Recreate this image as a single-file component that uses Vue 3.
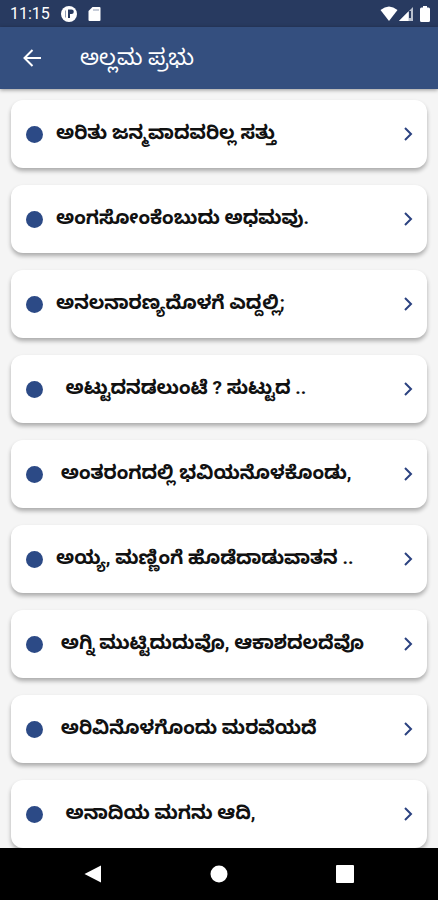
<script setup>
import { ref } from "vue";

const title = "ಅಲ್ಲಮ ಪ್ರಭು";

// some titles keep the leading spaces they have in the source text
const vachanas = ref([
  "ಅರಿತು ಜನ್ಮವಾದವರಿಲ್ಲ ಸತ್ತು",
  "ಅಂಗಸೋಂಕೆಂಬುದು ಅಧಮವು.",
  "ಅನಲನಾರಣ್ಯದೊಳಗೆ ಎದ್ದಲ್ಲಿ;",
  "  ಅಟ್ಟುದನಡಲುಂಟೆ ? ಸುಟ್ಟುದ ..",
  " ಅಂತರಂಗದಲ್ಲಿ ಭವಿಯನೊಳಕೊಂಡು,",
  "ಅಯ್ಯ, ಮಣ್ಣಿಂಗೆ ಹೊಡೆದಾಡುವಾತನ ..",
  " ಅಗ್ನಿ ಮುಟ್ಟಿದುದುವೊ, ಆಕಾಶದಲದೆವೊ",
  " ಅರಿವಿನೊಳಗೊಂದು ಮರವೆಯದೆ",
  "  ಅನಾದಿಯ ಮಗನು ಆದಿ,"
]);
</script>

<template>
  <div class="screen">
    <div class="status-bar">
      <span class="time">11:15</span>
      <svg class="status-icon" width="16" height="16" viewBox="0 0 16 16">
        <circle cx="8" cy="8" r="8" fill="#fff" />
        <path d="M4.500 4.500v7" stroke="#8f9bb3" />
        <path d="M7 3.500h3.500a2.300 2.300 0 0 1 0 4.600H9v4H7z" fill="#283a60" />
      </svg>
      <svg class="status-icon" width="13" height="16" viewBox="0 0 13 16">
        <path d="M4.500 1H11.500a1 1 0 0 1 1 1V14a1 1 0 0 1-1 1H1.500a1 1 0 0 1-1-1V5z" fill="#fff" />
        <path d="M5 4h6" stroke="#8f9bb3" />
      </svg>
      <div class="status-right">
        <svg width="18" height="16" viewBox="0 0 18 16">
          <path d="M0.500 4Q9-3 17.500 4L9 15z" fill="#fff" />
        </svg>
        <svg width="16" height="16" viewBox="0 0 16 16">
          <path d="M15 1V15H1z" fill="#b9c0ce" />
          <path d="M10.500 5.500V15H1z" fill="#fff" />
          <path d="M12 5v7" stroke="#283a60" stroke-width="2" />
        </svg>
        <svg class="battery" width="10" height="16" viewBox="0 0 10 16">
          <path d="M3 0h4v1.500h1.500A1.500 1.500 0 0 1 10 3v11.500a1.500 1.500 0 0 1-1.500 1.500h-7A1.500 1.500 0 0 1 0 14.500V3A1.500 1.500 0 0 1 1.500 1.500H3z" fill="#fff" />
        </svg>
      </div>
    </div>

    <header class="app-bar">
      <button class="back" aria-label="Back">
        <svg width="20" height="20" viewBox="0 0 20 20" fill="none" stroke="#fff" stroke-width="2">
          <path d="M19 10H3M10.500 2 2.500 10l8 8" />
        </svg>
      </button>
      <h1>{{ title }}</h1>
    </header>

    <main class="list">
      <a v-for="(item, index) in vachanas" :key="index" class="card" href="#">
        <span class="dot"></span>
        <span class="card-title">{{ item }}</span>
        <svg width="10" height="14" viewBox="0 0 10 14" fill="none" stroke="#2b4280" stroke-width="2">
          <path d="M2 1l6 6-6 6" />
        </svg>
      </a>
    </main>

    <nav class="nav-bar">
      <button aria-label="Back">
        <svg width="18" height="18" viewBox="0 0 18 18"><path d="M17 0.500v17L0.500 9z" fill="#fff" /></svg>
      </button>
      <button aria-label="Home">
        <svg width="18" height="18" viewBox="0 0 18 18"><circle cx="9" cy="9" r="8.500" fill="#fff" /></svg>
      </button>
      <button aria-label="Recent">
        <svg width="18" height="18" viewBox="0 0 18 18"><rect width="18" height="18" rx="1" fill="#fff" /></svg>
      </button>
    </nav>
  </div>
</template>

<style>
body {
  margin: 0;
}
</style>

<style scoped>
.screen {
  display: flex;
  flex-direction: column;
  height: 100vh;
  background-color: #f5f5f5;
  font-family: Roboto, "Noto Sans", "Noto Sans Kannada", sans-serif;
}

svg {
  display: block;
  flex: none;
}

button {
  padding: 0;
  border: none;
  background: none;
  cursor: pointer;
}

.status-bar {
  display: flex;
  flex: none;
  align-items: center;
  height: 27px;
  padding: 0 8px 0 10px;
  background-color: #283a60;
  color: #fff;
}

.time {
  font-size: 16px;
  line-height: 20px;
}

.status-icon {
  margin-left: 11px;
}

.status-right {
  display: flex;
  margin-left: auto;
}

.battery {
  margin-left: 6px;
}

.app-bar {
  display: flex;
  flex: none;
  align-items: center;
  z-index: 1;
  height: 62px;
  padding: 0 22px;
  background-color: #344f7f;
  box-shadow: 0 1px 4px rgba(0, 0, 0, 0.4);
}

h1 {
  margin: 0 0 0 38px;
  color: #fff;
  font-size: 22px;
  font-weight: 400;
  line-height: 32px;
}

.list {
  display: flex;
  flex: 1;
  flex-direction: column;
  gap: 17px;
  min-height: 0;
  padding: 11px 11px 0;
  overflow: hidden;
}

.card {
  display: flex;
  flex: none;
  align-items: center;
  box-sizing: border-box;
  height: 68px;
  padding: 0 14px 0 15px;
  border-radius: 12px;
  background-color: #fff;
  box-shadow: 0 3px 4px rgba(0, 0, 0, 0.3);
  color: #111;
  text-decoration: none;
}

.dot {
  flex: none;
  width: 17px;
  height: 17px;
  border-radius: 50%;
  background-color: #2c4a86;
}

.card-title {
  flex: 1;
  margin-left: 13px;
  padding-bottom: 2px;
  font-size: 19px;
  font-weight: 700;
  line-height: 24px;
  white-space: pre;
}

.nav-bar {
  display: flex;
  flex: none;
  align-items: center;
  justify-content: space-between;
  height: 52px;
  padding: 0 84px;
  background-color: #000;
}
</style>
